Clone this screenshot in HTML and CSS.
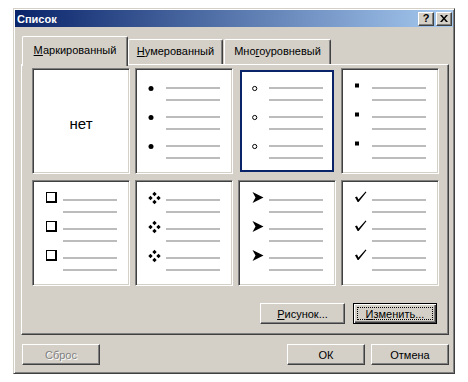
FILE: index.html
```html
<!DOCTYPE html>
<html lang="ru">
<head>
  <meta charset="UTF-8">
  <title>Список</title>
  <link rel="stylesheet" href="styles.css">
</head>
<body>

  <div class="dialog">
    <div class="titlebar">
      <span class="title">Список</span>
      <div class="title-btns">
        <span class="tbtn">?</span>
        <span class="tbtn">
          <svg width="8" height="7" viewBox="0 0 8 7"><path d="M0 0h2l2 2.4L6 0h2L5 3.5 8 7H6L4 4.6 2 7H0l3-3.5z"/></svg>
        </span>
      </div>
    </div>

    <div class="body">
      <div class="tabs">
        <div class="tab tab-bullets active"><u>М</u>аркированный</div>
        <div class="tab tab-numbers"><u>Н</u>умерованный</div>
        <div class="tab tab-levels">Мно<u>г</u>оуровневый</div>
      </div>

      <div class="panel">
        <div class="grid">
          <div class="cell none">нет</div>

          <div class="cell">
            <div class="item"><svg class="bullet" width="14" height="16" viewBox="0 0 14 16"><circle cx="4" cy="9.5" r="2.5"/></svg><div class="lines"><i></i><i></i></div></div>
            <div class="item"><svg class="bullet" width="14" height="16" viewBox="0 0 14 16"><circle cx="4" cy="9.5" r="2.5"/></svg><div class="lines"><i></i><i></i></div></div>
            <div class="item"><svg class="bullet" width="14" height="16" viewBox="0 0 14 16"><circle cx="4" cy="9.5" r="2.5"/></svg><div class="lines"><i></i><i></i></div></div>
          </div>

          <div class="cell selected">
            <div class="item"><svg class="bullet" width="14" height="16" viewBox="0 0 14 16"><circle cx="4.7" cy="9.5" r="2.1" fill="#fff" stroke="#000"/></svg><div class="lines"><i></i><i></i></div></div>
            <div class="item"><svg class="bullet" width="14" height="16" viewBox="0 0 14 16"><circle cx="4.7" cy="9.5" r="2.1" fill="#fff" stroke="#000"/></svg><div class="lines"><i></i><i></i></div></div>
            <div class="item"><svg class="bullet" width="14" height="16" viewBox="0 0 14 16"><circle cx="4.7" cy="9.5" r="2.1" fill="#fff" stroke="#000"/></svg><div class="lines"><i></i><i></i></div></div>
          </div>

          <div class="cell">
            <div class="item"><svg class="bullet" width="14" height="16" viewBox="0 0 14 16"><rect x="2" y="4.5" width="4" height="4"/></svg><div class="lines"><i></i><i></i></div></div>
            <div class="item"><svg class="bullet" width="14" height="16" viewBox="0 0 14 16"><rect x="2" y="4.5" width="4" height="4"/></svg><div class="lines"><i></i><i></i></div></div>
            <div class="item"><svg class="bullet" width="14" height="16" viewBox="0 0 14 16"><rect x="2" y="4.5" width="4" height="4"/></svg><div class="lines"><i></i><i></i></div></div>
          </div>

          <div class="cell">
            <div class="item"><svg class="bullet" width="14" height="16" viewBox="0 0 14 16"><rect x="2" y="1" width="11" height="11"/><rect x="3" y="2" width="8" height="8" fill="#fff"/></svg><div class="lines"><i></i><i></i></div></div>
            <div class="item"><svg class="bullet" width="14" height="16" viewBox="0 0 14 16"><rect x="2" y="1" width="11" height="11"/><rect x="3" y="2" width="8" height="8" fill="#fff"/></svg><div class="lines"><i></i><i></i></div></div>
            <div class="item"><svg class="bullet" width="14" height="16" viewBox="0 0 14 16"><rect x="2" y="1" width="11" height="11"/><rect x="3" y="2" width="8" height="8" fill="#fff"/></svg><div class="lines"><i></i><i></i></div></div>
          </div>

          <div class="cell">
            <div class="item"><svg class="bullet" width="14" height="16" viewBox="0 0 14 16"><path d="M7.5 0.8l2.2 2.2-2.2 2.2-2.2-2.2zM3.5 4.8l2.2 2.2-2.2 2.2-2.2-2.2zM11.5 4.8l2.2 2.2-2.2 2.2-2.2-2.2zM7.5 8.8l2.2 2.2-2.2 2.2-2.2-2.2z"/></svg><div class="lines"><i></i><i></i></div></div>
            <div class="item"><svg class="bullet" width="14" height="16" viewBox="0 0 14 16"><path d="M7.5 0.8l2.2 2.2-2.2 2.2-2.2-2.2zM3.5 4.8l2.2 2.2-2.2 2.2-2.2-2.2zM11.5 4.8l2.2 2.2-2.2 2.2-2.2-2.2zM7.5 8.8l2.2 2.2-2.2 2.2-2.2-2.2z"/></svg><div class="lines"><i></i><i></i></div></div>
            <div class="item"><svg class="bullet" width="14" height="16" viewBox="0 0 14 16"><path d="M7.5 0.8l2.2 2.2-2.2 2.2-2.2-2.2zM3.5 4.8l2.2 2.2-2.2 2.2-2.2-2.2zM11.5 4.8l2.2 2.2-2.2 2.2-2.2-2.2zM7.5 8.8l2.2 2.2-2.2 2.2-2.2-2.2z"/></svg><div class="lines"><i></i><i></i></div></div>
          </div>

          <div class="cell">
            <div class="item"><svg class="bullet" width="14" height="16" viewBox="0 0 14 16"><path d="M2.5 1L13.5 6.5 2.5 12 5.5 6.5z"/></svg><div class="lines"><i></i><i></i></div></div>
            <div class="item"><svg class="bullet" width="14" height="16" viewBox="0 0 14 16"><path d="M2.5 1L13.5 6.5 2.5 12 5.5 6.5z"/></svg><div class="lines"><i></i><i></i></div></div>
            <div class="item"><svg class="bullet" width="14" height="16" viewBox="0 0 14 16"><path d="M2.5 1L13.5 6.5 2.5 12 5.5 6.5z"/></svg><div class="lines"><i></i><i></i></div></div>
          </div>

          <div class="cell">
            <div class="item"><svg class="bullet" width="14" height="16" viewBox="0 0 14 16"><path d="M2 6.2L4 5.6 5.5 8.6 12.6 0.6 13.4 1.2 5.6 11 4.6 11z"/></svg><div class="lines"><i></i><i></i></div></div>
            <div class="item"><svg class="bullet" width="14" height="16" viewBox="0 0 14 16"><path d="M2 6.2L4 5.6 5.5 8.6 12.6 0.6 13.4 1.2 5.6 11 4.6 11z"/></svg><div class="lines"><i></i><i></i></div></div>
            <div class="item"><svg class="bullet" width="14" height="16" viewBox="0 0 14 16"><path d="M2 6.2L4 5.6 5.5 8.6 12.6 0.6 13.4 1.2 5.6 11 4.6 11z"/></svg><div class="lines"><i></i><i></i></div></div>
          </div>
        </div>

        <div class="panel-btns">
          <button class="btn btn-picture"><u>Р</u>исунок...</button>
          <button class="btn btn-edit default"><u>И</u>зменить...</button>
        </div>
      </div>

      <div class="footer">
        <button class="btn" disabled>Сброс</button>
        <button class="btn btn-ok">ОК</button>
        <button class="btn">Отмена</button>
      </div>
    </div>
  </div>

</body>
</html>
```

FILE: styles.css
```css
body {
  margin: 0;
  background: #fff;
  font-family: "Liberation Sans", Arial, sans-serif;
  font-size: 11px;
  color: #000;
}

.dialog {
  margin: 8px 0 0 13px;
  width: 442px;
  height: 366px;
  box-sizing: border-box;
  padding: 1px;
  background: #d4d0c8;
  border: 1px solid;
  border-color: #d4d0c8 #404040 #404040 #d4d0c8;
  box-shadow: inset 1px 1px #fff, inset -1px -1px #808080;
  display: flex;
  flex-direction: column;
}

/* title bar */
.titlebar {
  height: 17px;
  flex: none;
  background: linear-gradient(to right, #0a246a, #a6caf0);
  display: flex;
  align-items: center;
  justify-content: space-between;
  padding: 0 1px 0 2px;
}

.title {
  color: #fff;
  font-weight: bold;
  font-size: 11px;
}

.title-btns {
  display: flex;
  gap: 2px;
}

.tbtn {
  width: 16px;
  height: 14px;
  box-sizing: border-box;
  background: #d4d0c8;
  border: 1px solid;
  border-color: #fff #404040 #404040 #fff;
  box-shadow: inset -1px -1px #808080;
  display: flex;
  align-items: center;
  justify-content: center;
  font-weight: bold;
  font-size: 11px;
  line-height: 1;
}

/* content */
.body {
  flex: 1;
  padding: 9px 4px 0 6px;
  display: flex;
  flex-direction: column;
}

.tabs {
  display: flex;
  align-items: flex-end;
  height: 28px;
  padding-left: 1px;
  position: relative;
  z-index: 1;
}

.tab {
  height: 25px;
  box-sizing: border-box;
  background: #d4d0c8;
  border: 1px solid;
  border-bottom: none;
  border-color: #fff #404040 #fff #fff;
  box-shadow: inset -1px 0 #808080;
  border-radius: 2px 2px 0 0;
  text-align: center;
  padding-top: 5px;
  line-height: 13px;
}

.tab.active {
  height: 30px;
  margin-bottom: -2px;
  padding-top: 7px;
}

.tab-bullets { width: 106px; }
.tab-numbers { width: 95px; }
.tab-levels { width: 107px; margin-left: 1px; }

.panel {
  height: 271px;
  box-sizing: border-box;
  border: 1px solid;
  border-color: #fff #404040 #404040 #fff;
  box-shadow: inset -1px -1px #808080;
  padding: 3px 0 0 10px;
}

.grid {
  display: grid;
  grid-template-columns: repeat(4, 98px);
  grid-template-rows: 106px 106px;
  column-gap: 5px;
  row-gap: 6px;
}

.cell {
  background: #fff;
  box-sizing: border-box;
  border: 1px solid;
  border-color: #808080 #fff #fff #808080;
  box-shadow: inset 1px 1px #404040, inset -1px -1px #d4d0c8;
  padding: 18px 0 0 11px;
}

.cell.selected {
  border-color: #d4d0c8;
  box-shadow: inset 0 0 0 1px #d4d0c8, inset 0 0 0 3px #0a246a;
}

.cell.none {
  display: flex;
  align-items: center;
  justify-content: center;
  padding: 4px 0 0 0;
  font-size: 15px;
}

.item {
  display: flex;
  align-items: flex-start;
  margin-bottom: 15px;
}

.bullet {
  flex: none;
  margin: -8px 5px 0 0;
}

.lines i {
  display: block;
  width: 54px;
  height: 2px;
  background: #bcbcbc;
}

.lines i + i {
  margin-top: 10px;
}

/* buttons */
.btn {
  height: 21px;
  width: 78px;
  box-sizing: border-box;
  padding: 0;
  background: #d4d0c8;
  border: 1px solid;
  border-color: #fff #404040 #404040 #fff;
  box-shadow: inset -1px -1px #808080;
  font-family: "Liberation Sans", Arial, sans-serif;
  font-size: 11px;
  color: #000;
}

.btn:disabled {
  color: #808080;
  text-shadow: 1px 1px #fff;
}

.btn.default {
  position: relative;
  border-color: #000;
  box-shadow: inset 1px 1px #fff, inset -1px -1px #404040, inset -2px -2px #808080;
}

.btn.default::after {
  content: "";
  position: absolute;
  top: 3px;
  left: 3px;
  right: 3px;
  bottom: 3px;
  border: 1px dotted #000;
}

.panel-btns {
  display: flex;
  justify-content: flex-end;
  gap: 8px;
  margin-top: 17px;
  padding-right: 11px;
}

.btn-picture { width: 85px; }
.btn-edit { width: 84px; }

.footer {
  display: flex;
  gap: 6px;
  margin-top: 9px;
  padding-left: 1px;
}

.btn-ok {
  margin-left: auto;
}
```
